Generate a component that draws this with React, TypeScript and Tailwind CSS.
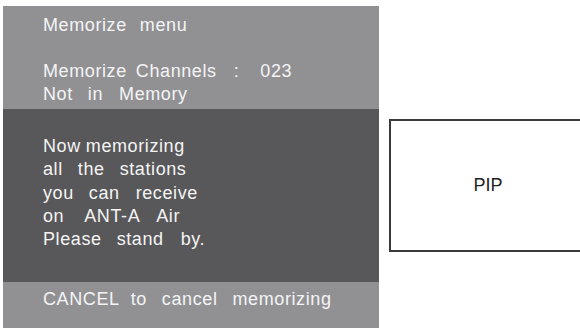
type Word = { t: string; ml: string };

function Line({ words }: { words: Word[] }) {
  return (
    <div className="whitespace-pre">
      {words.map((w, i) => (
        <span key={i} className={`inline-block ${w.ml}`}>
          {w.t}
        </span>
      ))}
    </div>
  );
}

export default function App() {
  return (
    <div
      className="flex h-[328px] w-[580px] overflow-hidden bg-white"
      style={{ fontFamily: '"Liberation Sans", Arial, sans-serif' }}
    >
      <div className="ml-[3px] mt-[6px] flex w-[376px] shrink-0 flex-col text-[18px] leading-[23px] tracking-[0.6px] text-[#f4f4f4]">
        <div className="h-[103px] bg-[#919194] pl-[40px] pt-[8px]">
          <Line words={[{ t: "Memorize", ml: "ml-0" }, { t: "menu", ml: "ml-[13px]" }]} />
          <div className="mt-[23px]">
            <Line
              words={[
                { t: "Memorize", ml: "ml-0" },
                { t: "Channels", ml: "ml-[9px]" },
                { t: ":", ml: "ml-[17px]" },
                { t: "023", ml: "ml-[21px]" },
              ]}
            />
            <Line
              words={[
                { t: "Not", ml: "ml-0" },
                { t: "in", ml: "ml-[15px]" },
                { t: "Memory", ml: "ml-[16px]" },
              ]}
            />
          </div>
        </div>
        <div className="h-[173px] bg-[#58585a] pl-[40px] pt-[26px] leading-[23.3px]">
          <Line words={[{ t: "Now", ml: "ml-0" }, { t: "memorizing", ml: "ml-[5px]" }]} />
          <Line
            words={[
              { t: "all", ml: "ml-0" },
              { t: "the", ml: "ml-[15px]" },
              { t: "stations", ml: "ml-[15px]" },
            ]}
          />
          <Line
            words={[
              { t: "you", ml: "ml-0" },
              { t: "can", ml: "ml-[15px]" },
              { t: "receive", ml: "ml-[16px]" },
            ]}
          />
          <Line
            words={[
              { t: "on", ml: "ml-0" },
              { t: "ANT-A", ml: "ml-[20px]" },
              { t: "Air", ml: "ml-[16px]" },
            ]}
          />
          <Line
            words={[
              { t: "Please", ml: "ml-0" },
              { t: "stand", ml: "ml-[15px]" },
              { t: "by.", ml: "ml-[17px]" },
            ]}
          />
        </div>
        <div className="flex-1 bg-[#919194] pl-[40px] pt-[6px]">
          <Line
            words={[
              { t: "CANCEL", ml: "ml-0" },
              { t: "to", ml: "ml-[11px]" },
              { t: "cancel", ml: "ml-[15px]" },
              { t: "memorizing", ml: "ml-[15px]" },
            ]}
          />
        </div>
      </div>
      <div className="ml-[10px] mt-[119px] flex h-[133px] w-[198px] shrink-0 items-center justify-center border-2 border-[#3a3a3a] text-[18px] text-[#222]">
        PIP
      </div>
    </div>
  );
}
